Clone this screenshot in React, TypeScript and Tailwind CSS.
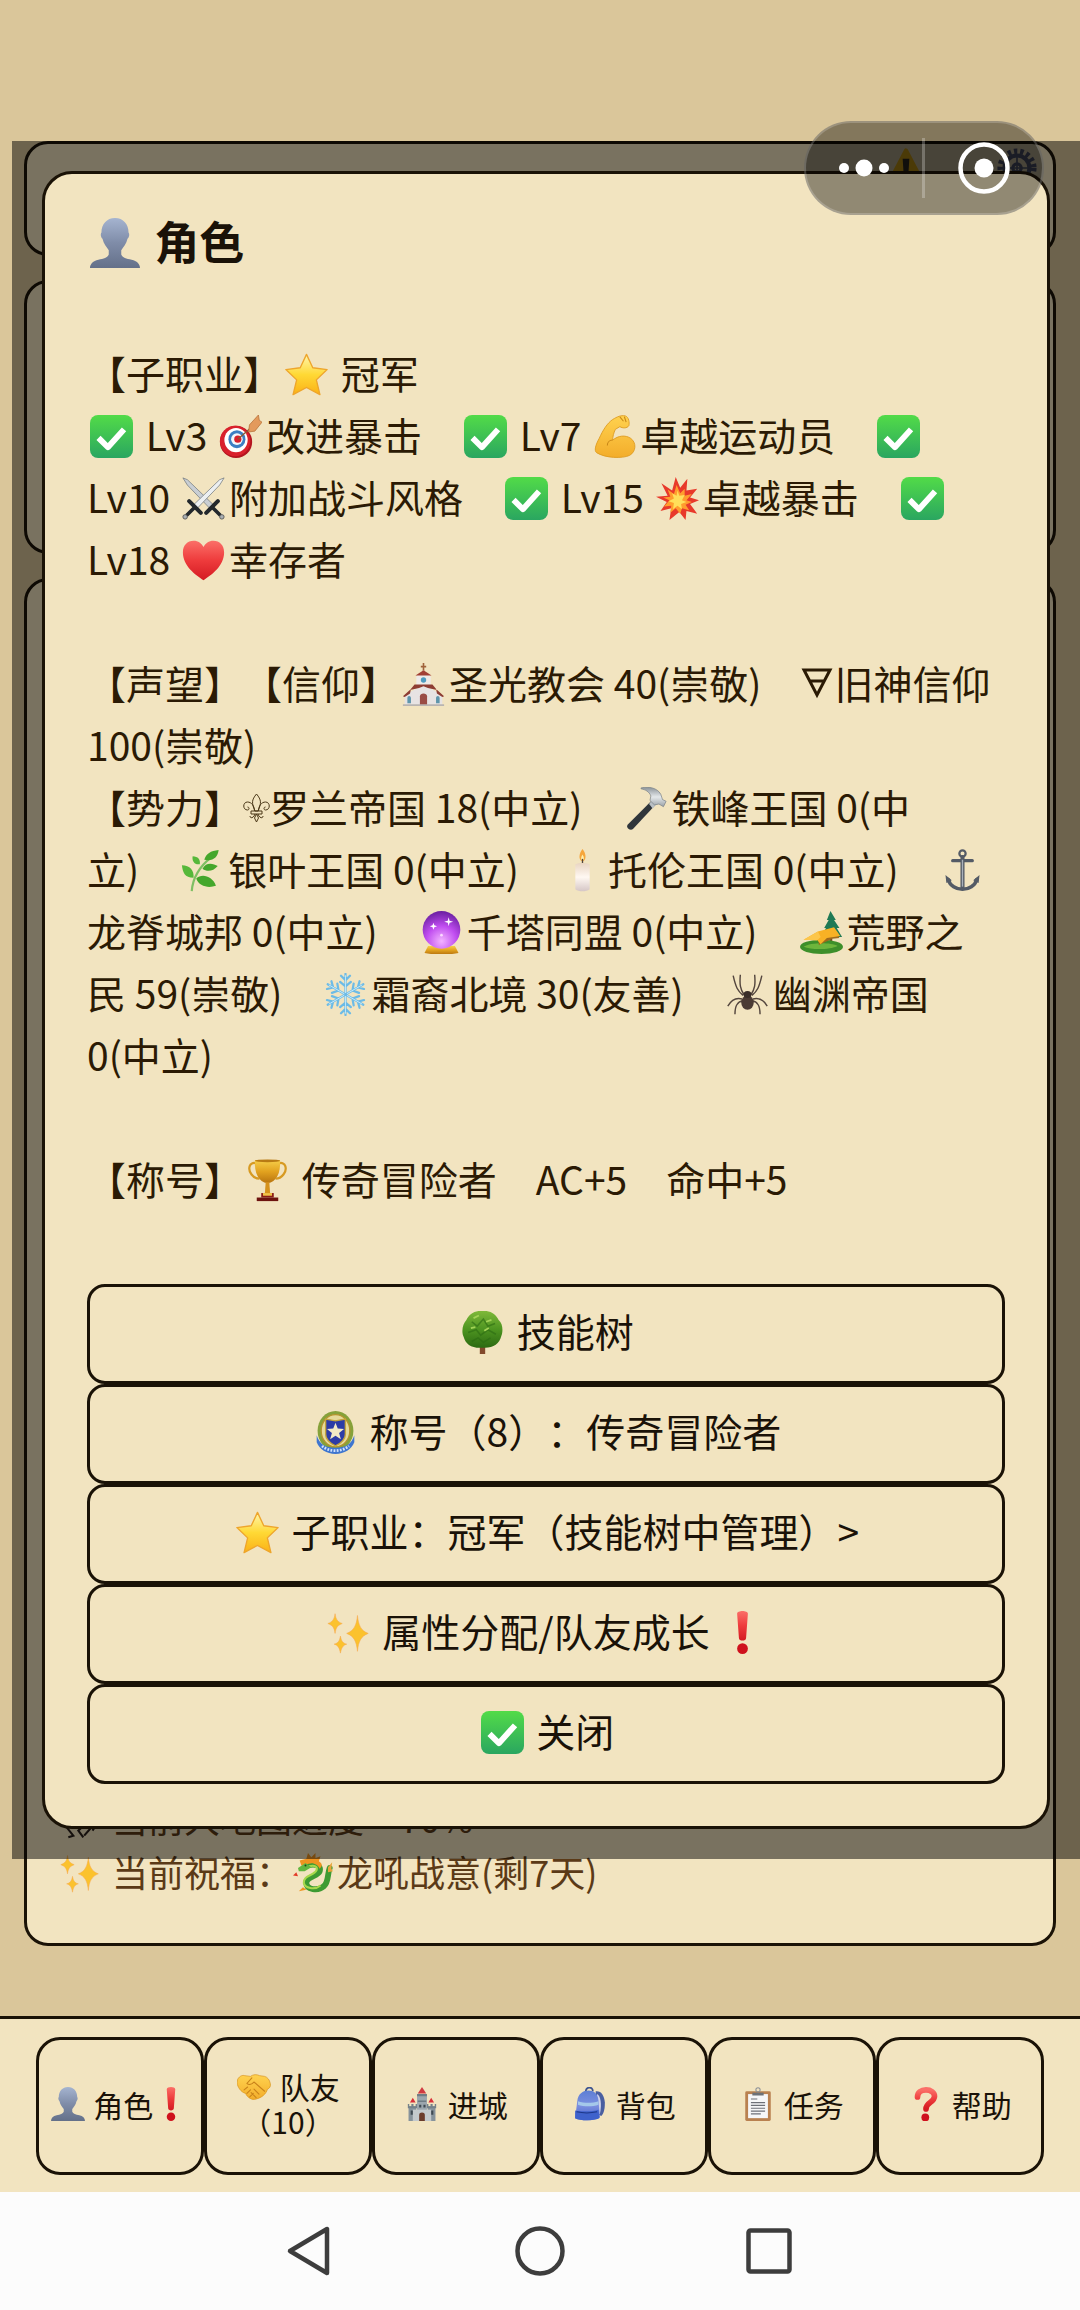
import type { ReactNode } from 'react';

const EMOJI: Record<string, ReactNode> = {
  person: (
    <path
      fill="url(#g-person)"
      d="M24 0c8 0 13 6 13 14 1 1 1 4-1 6-1 5-4 8-6 11v4c1 3 5 4 10 5 5 1 8 4 8 8H0c0-4 3-7 8-8 5-1 9-2 10-5v-4c-2-3-5-6-6-11-2-2-2-5-1-6C11 6 16 0 24 0z"
    />
  ),
  star: (
    <path
      fill="url(#g-star)"
      stroke="#eea52c"
      strokeWidth="1.5"
      strokeLinejoin="round"
      d="M24 1.500l7 15 16 2-12 11.500 4 16.500-15-8-15 8 4-16.500L1 18.500l16-2z"
    />
  ),
  check: (
    <>
      <rect width="48" height="48" rx="9" fill="url(#g-check)" />
      <path d="M9.500 25.500L20 36l18-20" fill="none" stroke="#fff" strokeWidth="6.500" strokeLinejoin="round" />
    </>
  ),
  target: (
    <>
      <ellipse cx="19" cy="30" rx="18" ry="18" fill="#b3151f" />
      <ellipse cx="18" cy="29" rx="17" ry="17" fill="#d9202c" />
      <ellipse cx="19" cy="28" rx="13" ry="13.500" fill="#fff" />
      <ellipse cx="20" cy="27" rx="9.500" ry="10" fill="#3c7fc4" />
      <ellipse cx="20" cy="27" rx="6.500" ry="6.500" fill="#f4f6fa" />
      <circle cx="21" cy="27" r="4" fill="#d9202c" />
      <path d="M21 27L36 14" stroke="#8a5a33" strokeWidth="1.500" />
      <path d="M34 11l10-11 1 6 3 2-8 10-7 1z" fill="#e39a5c" stroke="#b46d35" strokeWidth=".8" />
    </>
  ),
  arm: (
    <>
      <path
        d="M22 5c5-3 9-5 14-4 4 1 5 8 4 11-2 3-7 3-10 1l-5 3c-2 4-3 8-3 12 6-5 14-6 20-2 7 5 6 15-1 19-8 4-28 3-37-3-3-2-1-9 3-16C11 17 16 9 22 5z"
        fill="url(#g-skin)"
        stroke="#dd9c22"
        strokeWidth="1"
      />
      <path d="M30 2l4 5M35 2l2 6M22 28c-4 0-6 3-6 6" fill="none" stroke="#c98718" strokeWidth="1.200" />
    </>
  ),
  swords: (
    <>
      <path d="M1 1l5 2 29 28-4 4L6 9z" fill="#c9ced3" stroke="#6d757c" strokeWidth=".8" />
      <path d="M47 1l-5 2-29 28 4 4L42 9z" fill="#eceff1" stroke="#6d757c" strokeWidth=".8" />
      <path d="M8 27l13 13M40 27L27 40" stroke="#23282c" strokeWidth="4.500" strokeLinecap="round" />
      <path d="M14 34L5 43M34 34l9 9" stroke="#23282c" strokeWidth="4" />
      <circle cx="3.500" cy="44.500" r="2.500" fill="#aab0b5" stroke="#555" />
      <circle cx="44.500" cy="44.500" r="2.500" fill="#aab0b5" stroke="#555" />
    </>
  ),
  boom: (
    <>
      <path d="M22 0l5 12 8-10-1 13 12-2-8 10 10 3-10 4 8 11-12-3-1 10-7-9-11 9 2-13-12 3 7-10L0 22l13-1L6 7l12 8z" fill="#e8392b" />
      <path d="M23 9l4 9 5-5v8l8-2-6 7 6 2-7 3 4 6-8-2-2 6-5-6-6 5 1-8-8 1 6-7-7-3 8-1-3-8 7 5z" fill="#ff9d2e" />
      <path d="M24 15l2 6 6-1-3 6 5 2-6 2 1 6-5-4-5 4 1-7-6-2 6-3-2-6 5 3z" fill="#ffdf5a" />
    </>
  ),
  heart: (
    <path d="M24 46C15 40 1 30 1 15 1 7 6 2 13 2c5 0 9 3 11 7 2-4 6-7 11-7 7 0 12 5 12 13 0 15-14 25-23 31z" fill="url(#g-heart)" />
  ),
  church: (
    <>
      <path d="M24 0v11M21 4h6" stroke="#a0623b" strokeWidth="1.800" />
      <path d="M16 15l8-7 8 7v10H16z" fill="#eeeae8" />
      <path d="M15 14l9-6 9 6z" fill="#a23f34" />
      <circle cx="24" cy="19" r="3" fill="#4f9bc0" />
      <path d="M3 36l21-12 21 12v12H3z" fill="#e7e3e3" />
      <path d="M14 24h20l5 6-10-2-5-2-5 2-10 2zM1 37l9-8-1 5-6 4zM47 37l-9-8 1 5 6 4z" fill="#8e3d33" />
      <path d="M20 48V37c0-4 8-4 8 0v11z" fill="#9a4c45" />
      <path d="M6 45v-6c0-3 4-3 4 0v6zM38 45v-6c0-3 4-3 4 0v6z" fill="#5e95ab" />
      <path d="M1 47h46" stroke="#b9b4b1" strokeWidth="2" />
    </>
  ),
  hammer: (
    <>
      <path d="M31 15l5 4L10 47c-3 2-8-1-6-5z" fill="#30363b" />
      <path d="M28 19l6-8 5 5-7 8z" fill="#b9bfc4" />
      <path d="M19 1c9-2 18 0 22 7l2 6 4 2-3 6-5-3-5 1-5-5 1-5c-2-5-6-7-11-8z" fill="url(#g-steel)" stroke="#7b8288" strokeWidth=".8" />
    </>
  ),
  herb: (
    <>
      <path d="M12 47c1-14 8-27 22-38" fill="none" stroke="#7fbf63" strokeWidth="2.500" />
      <path d="M26 12c2-7 7-10 16-11-1 8-6 13-16 11zM24 22c4-8 12-6 17-3-5 6-12 7-17 3zM17 33c6-6 18-3 22 8-8 3-19 1-22-8z" fill="#45a72c" />
      <path d="M21 17c-6 1-9-4-8-9 6 0 9 4 8 9zM14 32C4 32 2 26 1 18c9 0 14 6 13 14z" fill="#56b83a" />
    </>
  ),
  candle: (
    <>
      <path d="M24 0c4 5 5 12 0 14-5-2-4-9 0-14z" fill="#f6a63c" />
      <path d="M24 6c2 3 2 6 0 7-2-1-2-4 0-7z" fill="#fff2b0" />
      <path d="M24 11v6" stroke="#57463d" strokeWidth="1.500" />
      <path d="M16 17c4-2 12-2 16 0v28c-4 3-12 3-16 0z" fill="url(#g-wax)" />
    </>
  ),
  anchor: (
    <>
      <g fill="none" stroke="#545b66" strokeLinecap="round">
        <circle cx="24" cy="5" r="3.500" strokeWidth="2.500" />
        <path d="M24 9v35" strokeWidth="4.500" />
        <path d="M13 13h22" strokeWidth="3.500" />
        <path d="M8 34c2 7 9 11 16 11s14-4 16-11" strokeWidth="4" />
      </g>
      <path d="M24 12v30" stroke="#a9b0ba" strokeWidth="1.500" />
      <path d="M5 29l7 6-6 3zM43 29l-7 6 6 3z" fill="#545b66" />
    </>
  ),
  crystal: (
    <>
      <path d="M9 39h30l4 8c-10 2-28 2-38 0z" fill="url(#g-gold)" />
      <circle cx="24" cy="21" r="21" fill="url(#g-crystal)" />
      <path d="M32 7l1 4 4 1-4 1-1 4-1-4-4-1 4-1zM15 13l1 3 3 1-3 1-1 3-1-3-3-1 3-1z" fill="#fff" />
      <circle cx="24" cy="27" r="1.500" fill="#fbd9ff" />
    </>
  ),
  camp: (
    <>
      <path d="M34 0l6 10-2 0 6 9-3 0 6 10H24l5-10-2 0 5-9-2 0z" fill="#1f7a55" />
      <path d="M33 26h3v12h-3z" fill="#7a4a22" />
      <ellipse cx="24" cy="40" rx="24" ry="8" fill="#3d8f2a" />
      <path d="M4 40c8-5 30-5 38-1-8 4-28 5-38 1z" fill="#6db53c" />
      <path d="M20 24l18-4 6 10-8 1-15 7z" fill="#a06a1c" />
      <path d="M4 32l16-9 18-5 7 10-15 2-7 7-4-5z" fill="#f8b125" />
      <path d="M4 32l16-9 3 6-4 4z" fill="#fcc64b" />
    </>
  ),
  snow: (
    <g stroke="#6cbbe6" strokeWidth="2.500" strokeLinecap="round" fill="none">
      {[0, 60, 120, 180, 240, 300].map((a) => (
        <g key={a} transform={`rotate(${a} 24 24)`}>
          <path d="M24 24V1M24 8l-5-5M24 8l5-5M24 15l-6-5M24 15l6-5" />
          <path d="M24 22V3" stroke="#c9ebfa" strokeWidth="1" />
        </g>
      ))}
    </g>
  ),
  spider: (
    <>
      <path
        d="M19 25C13 20 11 16 8 3M20 24c-4-6-5-11-4-22M29 25c6-5 8-9 11-22M28 24c4-6 5-11 4-22M18 29C11 27 6 30 2 37M19 31c-7 1-9 6-9 15M30 29c7-2 12 1 16 8M29 31c7 1 9 6 9 15"
        fill="none"
        stroke="#54463e"
        strokeWidth="1.600"
      />
      <ellipse cx="24" cy="33" rx="7" ry="8" fill="#4b3b34" />
      <ellipse cx="24" cy="24" rx="4.500" ry="4" fill="#3a2e29" />
    </>
  ),
  trophy: (
    <>
      <path d="M12 5C3 2 2 12 6 17c3 4 6 5 9 5M36 5c9-3 10 7 6 12-3 4-6 5-9 5" fill="none" stroke="#d79a22" strokeWidth="2.500" />
      <path d="M10 1h28c1 14-4 25-14 26C14 26 9 15 10 1z" fill="url(#g-gold)" />
      <path d="M22 26h4l1 13h-6z" fill="#d6921c" />
      <path d="M17 38h14v5H17z" fill="#8c1c17" />
      <path d="M12 43h24v4H12z" fill="#6d130f" />
      <path d="M19 38h10v3H19z" fill="#f2c448" />
      <ellipse cx="24" cy="2" rx="14" ry="1.500" fill="#b87a14" />
    </>
  ),
  tree: (
    <>
      <path d="M21 36h6v12h-6z" fill="#82492c" />
      <path d="M24 0c9-1 15 4 18 10 5 4 5 13 3 18-2 9-10 14-21 13C12 42 5 37 3 29c-3-6-1-15 3-19C9 4 15-1 24 0z" fill="url(#g-tree)" />
      <path d="M12 12l6 5 7-8 5 8 8-3M8 24l9-3 5 6 8-6 9 5M12 34l7-4 6 5 8-5" fill="none" stroke="#2c6b12" strokeWidth="1.800" opacity=".6" />
      <path d="M14 8l6-3M28 12l6-2M11 19l5-1M26 22l5-3" stroke="#a3d357" strokeWidth="2" />
    </>
  ),
  badge: (
    <>
      <ellipse cx="24" cy="22" rx="20" ry="22" fill="#86a13a" />
      <ellipse cx="24" cy="22" rx="16" ry="18" fill="#e6d99a" stroke="#b4932e" strokeWidth="1.500" />
      <path d="M13 9l11 2 11-2v17c0 6-5 10-11 13-6-3-11-7-11-13z" fill="#2d3ba6" stroke="#c5a43c" strokeWidth="1.500" />
      <path d="M24 13l2.500 6.500 7 .5-5.500 4.500 2 7-6-4-6 4 2-7-5.500-4.500 7-.5z" fill="#f4e9c5" />
      <path d="M3 27c3 10 10 14 21 14s18-4 21-14v8c-3 8-11 13-21 13S6 43 3 35z" fill="#3f76cf" />
      <path d="M9 39c8 7 22 7 30 0" fill="none" stroke="#cfe0fb" strokeWidth="3" strokeDasharray="2 1.500" />
    </>
  ),
  sparkles: (
    <g fill="#fbc22d" stroke="#f7a64e" strokeWidth=".6">
      <path d="M34 5c1 11 4 17 12 20-8 3-11 9-12 20-1-11-4-17-12-20 8-3 11-9 12-20z" />
      <path d="M9 3c1 7 3 9 8 11-5 2-7 4-8 11-1-7-3-9-8-11 5-2 7-4 8-11z" />
      <path d="M15 28c1 6 3 8 7 9-4 1-6 4-7 10-1-6-3-9-7-10 4-1 6-3 7-9z" />
    </g>
  ),
  bang: (
    <>
      <path d="M18 3c0-4 12-4 12 0l-2 27c0 4-8 4-8 0z" fill="url(#g-heart)" />
      <circle cx="24" cy="42" r="6" fill="#cf111d" />
    </>
  ),
  question: (
    <>
      <path d="M12 14c0-6 5-10 12-10 7 0 12 4 12 9 0 9-12 8-12 18" fill="none" stroke="url(#g-heart)" strokeWidth="8" strokeLinecap="round" />
      <circle cx="23" cy="43" r="5.500" fill="#cf111d" />
    </>
  ),
  handshake: (
    <>
      <path d="M1 13c3-5 7-6 10-5l8 1c4-3 9-3 13-1l7 1c4 1 7 5 8 10 1 4-1 7-4 8-2 7-8 12-16 14-6 2-12-2-15-8C5 31 1 24 0 18z" fill="url(#g-skin)" stroke="#d9951f" strokeWidth="1" />
      <path d="M21 11l-7 8c3 3 7 1 10-2l15 13M31 34l-7-7M27 39l-7-7M10 28l5-4M14 33l5-5M18 38l5-5" fill="none" stroke="#c9821a" strokeWidth="1.500" strokeLinecap="round" />
    </>
  ),
  castle: (
    <>
      <path d="M17 12h14v36H17z" fill="#9ba6ad" />
      <path d="M5 27h11v21H5zM32 27h11v21H32z" fill="#87939b" />
      <path d="M11 32h26v16H11z" fill="#c3c9cc" />
      <path d="M18 9l6-9 6 9z" fill="#cf3a41" />
      <path d="M17 10h14v3H17zM18 19h12v2H18z" fill="#6f7c84" />
      <path d="M4 24h2v3h3v-3h3v3h3v-3h2v6H4zM31 24h2v3h3v-3h3v3h3v-3h2v6H31z" fill="#75828a" />
      <path d="M7 22l4-7 4 7zM33 22l4-7 4 7z" fill="#d8323a" />
      <path d="M20 48V39c0-4 8-4 8 0v9z" fill="#6b3c2b" />
      <path d="M8 33h3v6H8zM37 33h3v6h-3zM20 25h3v4h-3zM26 25h3v4h-3z" fill="#3f4a52" />
    </>
  ),
  backpack: (
    <>
      <path d="M32 6c8-1 12 6 13 16 0 8-1 15-5 19l-6-3z" fill="#4a5fa0" />
      <path d="M34 10c5 3 7 14 4 28l-4 0z" fill="#cfd3ea" />
      <path d="M18 7c0-8 10-8 10-1" fill="none" stroke="#3d5490" strokeWidth="2.500" />
      <path d="M6 20C7 9 15 5 22 5s13 4 14 14l2 24c-8 5-26 5-35 1z" fill="url(#g-pack)" />
      <path d="M7 20c9 3 20 3 29 0v5c-9 3-20 3-29 0z" fill="#a5c8ea" />
      <path d="M3 33c10 2 24 2 33-1l1 12c-9 4-26 4-34 0z" fill="#3f62cc" />
      <path d="M5 35c9 2 20 2 29 0" stroke="#1d3789" strokeWidth="1.500" fill="none" />
    </>
  ),
  clipboard: (
    <>
      <rect x="6" y="6" width="36" height="42" rx="2" fill="#b98150" />
      <path d="M10 10h28v34H10z" fill="#f6f6f8" />
      <path d="M14 17h9M14 22h20M14 26h20M14 30h20M14 34h20M14 38h14" stroke="#6d7078" strokeWidth="1.600" />
      <circle cx="24" cy="4" r="3" fill="none" stroke="#8e9298" strokeWidth="1.500" />
      <path d="M16 8h16v4H16z" fill="#6c7177" />
    </>
  ),
  dragon: (
    <>
      <path d="M17 15c10-3 17 0 15 7-2 6-16 6-16 14 0 8 14 10 21 4 6-5 4-14 7-22" fill="none" stroke="#3d9b32" strokeWidth="7" strokeLinecap="round" />
      <path d="M19 16c8-2 11 1 9 5-3 6-16 6-15 15 1 6 13 9 20 3" fill="none" stroke="#a7d84c" strokeWidth="2.500" />
      <path d="M10 15L8 9l8-2 2-7 4 5 5-5 0 6 6-2-2 6c5 3 4 6 1 9-2-5-8-8-13-6z" fill="#ef9420" />
      <path d="M6 18l9-6 7 5-8 5-7 0z" fill="#62b63f" />
      <circle cx="15" cy="15" r="1.200" fill="#23401a" />
      <path d="M42 17l5-6-1 8 2 3-6 1z" fill="#e8a33a" />
      <path d="M0 27l4-4 2 5z" fill="#e33a27" />
      <path d="M12 41l-5 5 9-2z" fill="#ef9420" />
    </>
  ),
  horse: (
    <path
      d="M14 18c8-4 18-3 24 2l5 12-4 6M38 22l-2 14-7 8M30 30l-8 8 6 8M18 28l-10 6 8 10-6 2M14 18L6 8"
      fill="none"
      stroke="#2b211b"
      strokeWidth="2.500"
    />
  ),
  warning: (
    <>
      <path d="M24 3l20 38H4z" fill="#fcc21b" stroke="#fcc21b" strokeWidth="5" strokeLinejoin="round" />
      <path d="M20 13h8l-1 16h-6z" fill="#37322b" />
      <circle cx="24" cy="35" r="3" fill="#37322b" />
    </>
  ),
  gear: (
    <g fill="none" stroke="#59617f">
      <circle cx="24" cy="24" r="20" strokeWidth="7" strokeDasharray="4 3.500" />
      <circle cx="24" cy="24" r="15" strokeWidth="5" />
      <circle cx="24" cy="24" r="5" strokeWidth="4" />
      <path d="M24 9v30M9 24h30" strokeWidth="2" />
    </g>
  ),
};

const EMOJI_SIZE = {
  sm: 'w-[34px] h-[34px] ml-px mr-0.5',
  md: 'w-10 h-10 ml-px mr-1 mt-1',
  lg: 'w-[43px] h-[43px] ml-[3px] mr-1 mt-1',
  xl: 'w-[50px] h-[50px] ml-[3px] mr-1 mt-1',
};

function Emoji({ name, size = 'lg' }: { name: string; size?: keyof typeof EMOJI_SIZE }) {
  return (
    <svg viewBox="0 0 48 48" preserveAspectRatio="none" className={`shrink-0 ${EMOJI_SIZE[size]}`} aria-hidden="true">
      {EMOJI[name]}
    </svg>
  );
}

function Fill({ id, stops, radial }: { id: string; stops: string[]; radial?: boolean }) {
  const items = stops.map((c, i) => <stop key={c} offset={i / (stops.length - 1)} stopColor={c} />);
  if (radial) return <radialGradient id={id} cx=".5" cy=".8" r=".8">{items}</radialGradient>;
  return <linearGradient id={id} x1="0" y1="0" x2="0" y2="1">{items}</linearGradient>;
}

// Shared colour ramps for the emoji
function Gradients() {
  return (
    <svg className="absolute w-0 h-0" aria-hidden="true">
      <defs>
        <Fill id="g-person" stops={['#a5b4d0', '#7f8ca8', '#647089']} />
        <Fill id="g-star" stops={['#fff6b0', '#ffd935', '#fbb116']} />
        <Fill id="g-check" stops={['#52db48', '#2aa660']} />
        <Fill id="g-skin" stops={['#ffd24f', '#f3ad2b']} />
        <Fill id="g-heart" stops={['#fb6f68', '#ee3b3c', '#d41a22']} />
        <Fill id="g-steel" stops={['#8b9298', '#e4e8ea', '#9aa1a7']} />
        <Fill id="g-wax" stops={['#e9d5c2', '#fff8f2', '#d5c6c6']} />
        <Fill id="g-gold" stops={['#f6cf4a', '#e2a21f', '#b8740f']} />
        <Fill id="g-tree" stops={['#7fb93a', '#4d9420', '#2c6a12']} />
        <Fill id="g-pack" stops={['#5d7fd4', '#7c8fe0', '#4a64cc']} />
        <Fill id="g-crystal" radial stops={['#f3b3ff', '#c04df0', '#6a1fa0']} />
      </defs>
    </svg>
  );
}

type Part = string | { e: string };

const e = (name: string): Part => ({ e: name });

function Glyph({ name }: { name: string }) {
  // alchemical earth sign and fleur-de-lis are thin line marks, not colour emoji
  if (name === 'earth') {
    return (
      <svg viewBox="0 0 34 34" className="w-[34px] h-[34px] shrink-0" fill="none" stroke="#2b1a04" strokeWidth="3" aria-hidden="true">
        <path d="M4 5h26L17 30zM9 16h16" />
      </svg>
    );
  }
  if (name === 'lily') {
    return (
      <svg viewBox="0 0 27 30" className="w-[27px] h-[30px] mt-1 shrink-0" fill="none" stroke="#4a3717" strokeWidth="1" aria-hidden="true">
        <path d="M13.500 1c5 6 5 9 1.500 17h-3c-3.500-8-3.500-11 1.500-17zM8 18h11v3H8zM11.500 18c0-5-3-9-7-9-5 0-5 8 0 8 2 0 2-3 0-3M15.500 18c0-5 3-9 7-9 5 0 5 8 0 8-2 0-2-3 0-3M12 21c-1 4-5 5-5 2M15 21c1 4 5 5 5 2M13.500 21l2 4-2 4-2-4z" />
      </svg>
    );
  }
  return <Emoji name={name} />;
}

const PROFILE: Part[][] = [
  ['【子职业】', e('star'), ' 冠军'],
  [e('check'), ' Lv3 ', e('target'), '改进暴击\u3000', e('check'), ' Lv7 ', e('arm'), '卓越运动员\u3000', e('check')],
  ['Lv10 ', e('swords'), '附加战斗风格\u3000', e('check'), ' Lv15 ', e('boom'), '卓越暴击\u3000', e('check')],
  ['Lv18 ', e('heart'), '幸存者'],
  [],
  ['【声望】【信仰】', e('church'), '圣光教会 40(崇敬)\u3000', e('earth'), '旧神信仰'],
  ['100(崇敬)'],
  ['【势力】', e('lily'), '罗兰帝国 18(中立)\u3000', e('hammer'), '铁峰王国 0(中'],
  ['立)\u3000', e('herb'), '银叶王国 0(中立)\u3000', e('candle'), '托伦王国 0(中立)\u3000', e('anchor')],
  ['龙脊城邦 0(中立)\u3000', e('crystal'), '千塔同盟 0(中立)\u3000', e('camp'), '荒野之'],
  ['民 59(崇敬)\u3000', e('snow'), '霜裔北境 30(友善)\u3000', e('spider'), '幽渊帝国'],
  ['0(中立)'],
  [],
  ['【称号】', e('trophy'), ' 传奇冒险者\u3000AC+5\u3000命中+5'],
];

const ACTIONS: { icon: string; label: string; alert?: boolean }[] = [
  { icon: 'tree', label: ' 技能树' },
  { icon: 'badge', label: ' 称号（8）：传奇冒险者' },
  { icon: 'star', label: ' 子职业：冠军（技能树中管理）>' },
  { icon: 'sparkles', label: ' 属性分配/队友成长 ', alert: true },
  { icon: 'check', label: ' 关闭' },
];

const TABS: { icon: string; label: string; sub?: string; alert?: boolean }[] = [
  { icon: 'person', label: ' 角色', alert: true },
  { icon: 'handshake', label: ' 队友', sub: '（10）' },
  { icon: 'castle', label: ' 进城' },
  { icon: 'backpack', label: ' 背包' },
  { icon: 'clipboard', label: ' 任务' },
  { icon: 'question', label: ' 帮助' },
];

function RoleDialog() {
  return (
    <div className="absolute left-3 right-0 top-[141px] bg-black/50 p-[30px]">
      <section
        role="dialog"
        aria-labelledby="role-title"
        className="rounded-[30px] border-3 border-[#1a1206] bg-[#f2e4c0] p-[42px]"
      >
        <h2 id="role-title" className="flex h-[50px] items-center whitespace-pre text-[45px] leading-[50px] font-bold text-[#1a1208]">
          <Emoji name="person" size="xl" />
          <span> 角色</span>
        </h2>

        <div className="mt-[75px] text-[39px] leading-[62px] text-[#2b1a04]">
          {PROFILE.map((line, i) => (
            <p key={i} className="flex h-[62px] items-center whitespace-pre">
              {line.map((part, j) =>
                typeof part === 'string' ? <span key={j}>{part}</span> : <Glyph key={j} name={part.e} />
              )}
            </p>
          ))}
        </div>

        <div className="mt-[75px] flex flex-col">
          {ACTIONS.map((action) => (
            <button
              key={action.icon}
              type="button"
              className="flex h-[100px] items-center justify-center rounded-[18px] border-3 border-[#1a1206] pb-2 whitespace-pre text-[39px] leading-[62px] text-[#1a1208]"
            >
              <Emoji name={action.icon} />
              <span>{action.label}</span>
              {action.alert && <Emoji name="bang" />}
            </button>
          ))}
        </div>
      </section>
    </div>
  );
}

function Capsule() {
  return (
    <div className="absolute top-[121px] right-9 flex h-[94px] w-[240px] items-center rounded-full border-2 border-white/20 bg-black/40">
      <button type="button" aria-label="更多" className="flex w-[116px] items-center justify-center">
        <svg viewBox="0 0 52 20" className="w-[52px] h-5" fill="#fff">
          <circle cx="6" cy="10" r="5" />
          <circle cx="26" cy="10" r="8.500" />
          <circle cx="46" cy="10" r="5" />
        </svg>
      </button>
      <span className="h-[60px] w-[3px] bg-white/25" />
      <button type="button" aria-label="关闭小程序" className="flex flex-1 items-center justify-center">
        <svg viewBox="0 0 52 52" className="w-[52px] h-[52px]">
          <circle cx="26" cy="26" r="23.500" fill="none" stroke="#fff" strokeWidth="4.500" />
          <circle cx="26" cy="26" r="9.500" fill="#fff" />
        </svg>
      </button>
    </div>
  );
}

export default function App() {
  return (
    <div className="relative bg-[#dac69a] font-['Noto_Sans_CJK_SC',sans-serif] [text-spacing-trim:space-all]">
      <Gradients />

      {/* Cards that stay visible around the dialog */}
      <main className="flex flex-col gap-6 px-6 pt-[141px] pb-[70px]">
        <section className="flex h-[115px] justify-end gap-[66px] rounded-3xl border-3 border-[#1a1206] bg-[#f2e4c0] px-3">
          <Emoji name="warning" size="md" />
          <Emoji name="gear" size="md" />
        </section>
        <section className="h-[274px] rounded-3xl border-3 border-[#1a1206] bg-[#f2e4c0]" />
        <section className="flex h-[1368px] flex-col justify-end rounded-3xl border-3 border-[#1a1206] bg-[#f2e4c0] px-8 pb-[45px] text-4xl leading-[54px] text-[#5b3a17]">
          <p className="flex h-[54px] items-center whitespace-pre">
            <Emoji name="horse" size="md" />
            <span>{' 当前大地图进度\u300070%'}</span>
          </p>
          <p className="flex h-[54px] items-center whitespace-pre">
            <Emoji name="sparkles" size="md" />
            <span> 当前祝福：</span>
            <Emoji name="dragon" size="md" />
            <span>龙吼战意(剩7天)</span>
          </p>
        </section>
      </main>

      <nav className="flex h-44 items-start border-t-3 border-[#1a1206] bg-[#f2e4c0] px-9 pt-[18px]">
        {TABS.map((tab) => (
          <button
            key={tab.icon}
            type="button"
            className="flex h-[138px] flex-1 items-center justify-center rounded-3xl border-3 border-[#1a1206] pb-1 text-[30px] leading-[35px] text-[#1a1208]"
          >
            <span className="text-center whitespace-pre">
              <span className="inline-flex h-[35px] items-center align-top">
                <Emoji name={tab.icon} size="sm" />
                {tab.label}
                {tab.alert && <Emoji name="bang" size="sm" />}
              </span>
              {tab.sub && (
                <>
                  <br />
                  {tab.sub}
                </>
              )}
            </span>
          </button>
        ))}
      </nav>

      {/* System navigation */}
      <div className="flex h-[118px] items-center justify-center gap-[180px] bg-[#fcfcfc] text-[#3d3d3d]">
        <button type="button" aria-label="返回">
          <svg viewBox="0 0 48 52" className="w-12 h-[52px]" fill="none" stroke="currentColor" strokeWidth="4.500" strokeLinejoin="round">
            <path d="M41 4v44L4 26z" />
          </svg>
        </button>
        <button type="button" aria-label="主屏幕">
          <svg viewBox="0 0 52 52" className="w-[52px] h-[52px]" fill="none" stroke="currentColor" strokeWidth="4.500">
            <circle cx="26" cy="26" r="22.500" />
          </svg>
        </button>
        <button type="button" aria-label="最近任务">
          <svg viewBox="0 0 48 52" className="w-12 h-[52px]" fill="none" stroke="currentColor" strokeWidth="4.500">
            <rect x="2.500" y="5.500" width="41" height="41" rx="2" />
          </svg>
        </button>
      </div>

      <RoleDialog />
      <Capsule />
    </div>
  );
}
